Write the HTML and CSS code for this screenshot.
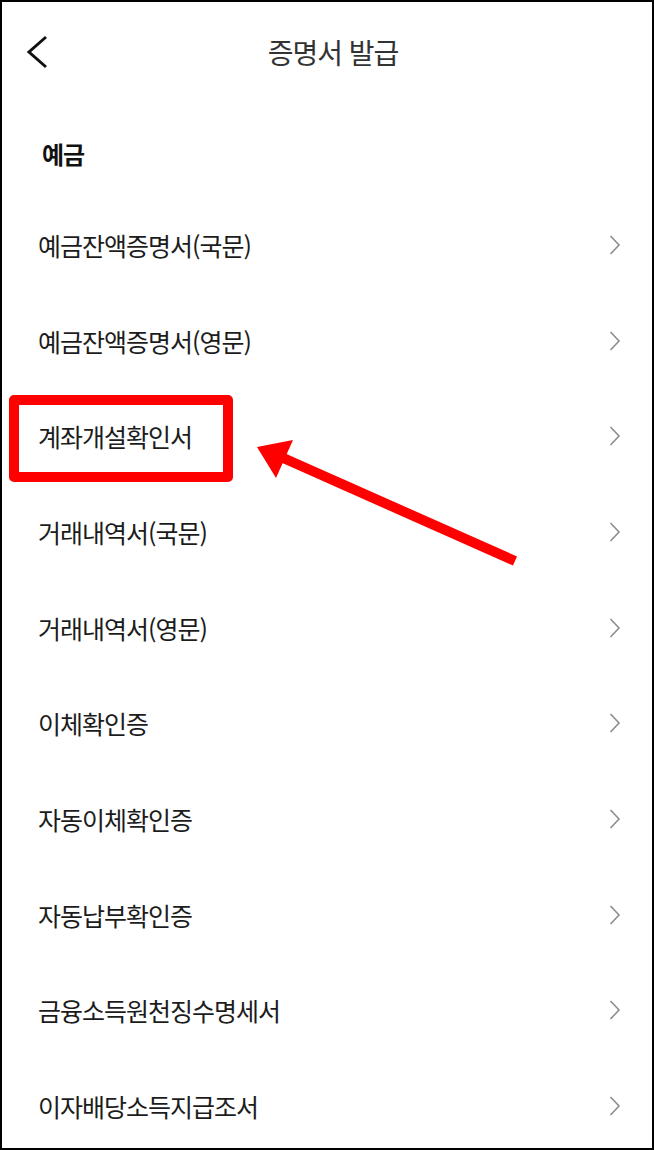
FILE: index.html
```html
<!DOCTYPE html>
<html lang="ko">
<head>
<meta charset="utf-8">
<title>증명서 발급</title>
<link rel="stylesheet" href="styles.css">
</head>
<body>
<div class="screen">
  <header class="appbar">
    <span class="back">
      <svg width="24" height="34" viewBox="0 0 24 34"><polyline points="20,2 3,17 20,32" fill="none" stroke="#111" stroke-width="3" stroke-linecap="butt" stroke-linejoin="miter"/></svg>
    </span>
    <h1 class="title">증명서 발급</h1>
    <span class="spacer"></span>
  </header>
  <h2 class="section">예금</h2>
  <ul class="list">
    <li class="row"><span class="label">예금잔액증명서(국문)</span><svg class="chev" width="12" height="20" viewBox="0 0 12 20"><polyline points="1.5,1 10,10 1.5,19" fill="none" stroke="#8c8c8c" stroke-width="1.6"/></svg></li>
    <li class="row"><span class="label">예금잔액증명서(영문)</span><svg class="chev" width="12" height="20" viewBox="0 0 12 20"><polyline points="1.5,1 10,10 1.5,19" fill="none" stroke="#8c8c8c" stroke-width="1.6"/></svg></li>
    <li class="row"><span class="label">계좌개설확인서</span><svg class="chev" width="12" height="20" viewBox="0 0 12 20"><polyline points="1.5,1 10,10 1.5,19" fill="none" stroke="#8c8c8c" stroke-width="1.6"/></svg></li>
    <li class="row"><span class="label">거래내역서(국문)</span><svg class="chev" width="12" height="20" viewBox="0 0 12 20"><polyline points="1.5,1 10,10 1.5,19" fill="none" stroke="#8c8c8c" stroke-width="1.6"/></svg></li>
    <li class="row"><span class="label">거래내역서(영문)</span><svg class="chev" width="12" height="20" viewBox="0 0 12 20"><polyline points="1.5,1 10,10 1.5,19" fill="none" stroke="#8c8c8c" stroke-width="1.6"/></svg></li>
    <li class="row"><span class="label">이체확인증</span><svg class="chev" width="12" height="20" viewBox="0 0 12 20"><polyline points="1.5,1 10,10 1.5,19" fill="none" stroke="#8c8c8c" stroke-width="1.6"/></svg></li>
    <li class="row"><span class="label">자동이체확인증</span><svg class="chev" width="12" height="20" viewBox="0 0 12 20"><polyline points="1.5,1 10,10 1.5,19" fill="none" stroke="#8c8c8c" stroke-width="1.6"/></svg></li>
    <li class="row"><span class="label">자동납부확인증</span><svg class="chev" width="12" height="20" viewBox="0 0 12 20"><polyline points="1.5,1 10,10 1.5,19" fill="none" stroke="#8c8c8c" stroke-width="1.6"/></svg></li>
    <li class="row"><span class="label">금융소득원천징수명세서</span><svg class="chev" width="12" height="20" viewBox="0 0 12 20"><polyline points="1.5,1 10,10 1.5,19" fill="none" stroke="#8c8c8c" stroke-width="1.6"/></svg></li>
    <li class="row"><span class="label">이자배당소득지급조서</span><svg class="chev" width="12" height="20" viewBox="0 0 12 20"><polyline points="1.5,1 10,10 1.5,19" fill="none" stroke="#8c8c8c" stroke-width="1.6"/></svg></li>
  </ul>
  <div class="highlight"></div>
  <svg class="pointer" width="654" height="1150" viewBox="0 0 654 1150">
    <line x1="281" y1="457" x2="515" y2="561" stroke="#ff0000" stroke-width="10" stroke-linecap="butt"/>
    <polygon points="257,447 293,440 276,478" fill="#ff0000"/>
  </svg>
</div>
</body>
</html>
```

FILE: styles.css
```css
html, body {
  margin: 0;
  padding: 0;
  background: #ffffff;
}

.screen {
  position: relative;
  width: 654px;
  height: 1150px;
  box-sizing: border-box;
  border: 2px solid #000;
  overflow: hidden;
  font-family: "Noto Sans CJK KR", "Noto Sans", sans-serif;
  color: #1c1c1c;
}

.appbar {
  height: 100px;
  display: grid;
  grid-template-columns: 60px 1fr 60px;
  align-items: center;
}

.back {
  display: flex;
  align-items: center;
  padding-left: 24px;
}

.back svg {
  display: block;
}

.title {
  margin: 0;
  text-align: center;
  font-size: 28px;
  font-weight: 400;
  letter-spacing: -1px;
  line-height: 34px;
  color: #333;
  padding-left: 12px;
}

.section {
  margin: 0;
  padding: 37px 0 28px 40px;
  font-size: 24px;
  font-weight: 700;
  letter-spacing: -1px;
  line-height: 30px;
  color: #111;
}

.list {
  list-style: none;
  margin: 0;
  padding: 0;
}

.row {
  height: 95.7px;
  display: flex;
  align-items: center;
  justify-content: space-between;
  padding: 0 31px 0 36px;
}

.label {
  font-size: 25px;
  letter-spacing: -1px;
  line-height: 30px;
  color: #1c1c1c;
}

.chev {
  display: block;
}

.highlight {
  position: absolute;
  left: 7px;
  top: 393px;
  width: 224px;
  height: 87px;
  box-sizing: border-box;
  border: 10px solid #ff0000;
  border-radius: 5px;
}

.pointer {
  position: absolute;
  left: -2px;
  top: -2px;
}
```
